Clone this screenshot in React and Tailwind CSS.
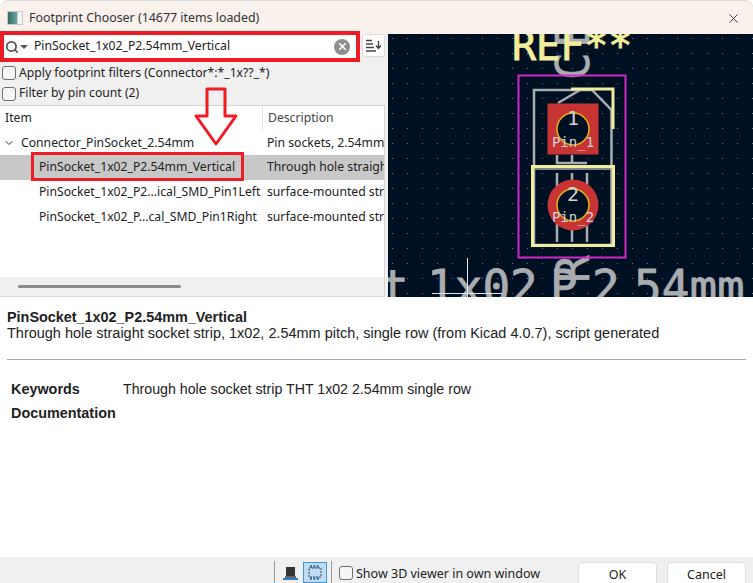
import { ChevronDown, Search, X } from 'lucide-react';

const rows = [
  { name: 'PinSocket_1x02_P2...ical_SMD_Pin1Left', desc: 'surface-mounted straight socket strip', height: 'h-[25px]' },
  { name: 'PinSocket_1x02_P...cal_SMD_Pin1Right', desc: 'surface-mounted straight socket strip', height: 'h-[24px]' },
];

function CheckBox() {
  return <span className="block w-[14px] h-[14px] shrink-0 rounded-[3px] border border-[#6e6e6e] bg-[#f6f6f6]" />;
}

function Preview() {
  const gray = '#a9adb0';
  const silk = '#f2ee9c';
  return (
    <svg className="block w-full h-full" viewBox="388 34 365 263">
      <defs>
        <pattern id="grid" x="385" y="31" width="15" height="15" patternUnits="userSpaceOnUse">
          <rect x="7" y="7" width="1" height="1" fill="#6b7683" />
        </pattern>
      </defs>
      <rect x="388" y="34" width="365" height="263" fill="#001023" />
      <rect x="388" y="34" width="365" height="263" fill="url(#grid)" />

      {/* fab layer */}
      <g fill="none" stroke={gray} strokeWidth="2.5">
        <path d="M534 245V90H592L611.5 110V245H534" />
        <path d="M558 103L580 90" />
        <path d="M557 155V163H587" />
        <path d="M572 155V163" />
        <path d="M557 173V242M572 173V242M587 173V242" />
        <path d="M534 169H611" strokeWidth="1.5" />
      </g>
      <g fontFamily="'DejaVu Sans Mono', monospace" fontSize="46" fill={gray} stroke={gray} strokeWidth="0.6">
        <text transform="rotate(-90 589 283)" x="589" y="283">R</text>
        <text transform="rotate(-90 589 80)" x="589" y="80">C</text>
        <text transform="rotate(-90 589 48)" x="589" y="48">E</text>
      </g>

      {/* courtyard */}
      <rect x="518.5" y="75.5" width="107" height="182" fill="none" stroke="#d12ac4" strokeWidth="2" />

      {/* pads */}
      <rect x="547.5" y="103.5" width="51" height="51" fill="#c83434" />
      <circle cx="573" cy="205" r="25.5" fill="#c83434" />
      <circle cx="573" cy="129" r="16" fill="#001023" stroke="#e3b51c" strokeWidth="1.5" />
      <circle cx="573" cy="205" r="16" fill="#001023" stroke="#e3b51c" strokeWidth="1.5" />

      {/* silk */}
      <rect x="532.5" y="166.5" width="81" height="79" fill="none" stroke={silk} strokeWidth="3" />
      <path d="M571 89H613V129" fill="none" stroke={silk} strokeWidth="3" />
      <text x="512" y="60" fontFamily="'DejaVu Sans Mono', monospace" fontSize="40" fill={silk} stroke={silk} strokeWidth="0.9">REF**</text>

      {/* pad labels */}
      <g fontFamily="'DejaVu Sans Mono', monospace" fill="#d0d3d6" textAnchor="middle">
        <text x="573" y="125" fontSize="20">1</text>
        <text x="573" y="201" fontSize="20">2</text>
        <text x="573" y="147" fontSize="14">Pin_1</text>
        <text x="573" y="222" fontSize="14">Pin_2</text>
      </g>

      {/* value text */}
      <g fontFamily="'DejaVu Sans Mono', monospace" fontSize="46" fill={gray} stroke={gray} strokeWidth="0.8">
        <text x="381" y="303">t</text>
        <text x="427" y="303">1x02</text>
        <text x="550" y="303">P</text>
        <text x="592" y="303">2</text>
        <text x="634" y="303">54mm</text>
      </g>

      {/* crosshair */}
      <path d="M467.5 258V297M432 293.5H502" stroke="#e8e8e8" strokeWidth="1" />
    </svg>
  );
}

export default function App() {
  return (
    <div className="relative w-[753px] h-[583px] overflow-hidden flex flex-col bg-white text-[12.2px] text-[#222] font-['Noto_Sans',sans-serif]">
      {/* title bar */}
      <div className="h-[34px] shrink-0 flex items-center pt-[1px] pl-[7px] pr-[12px] bg-[#f8f1ec] rounded-t-[8px] border-t border-[#d8d8d8]">
        <span className="w-[16px] h-[14px] border border-[#c9c9c9] bg-[linear-gradient(90deg,#2f6f6a,#6fa59d_65%,#f4f4f4_70%)] mr-[6px]" />
        <span className="text-[12.4px] text-[#333]">Footprint Chooser (14677 items loaded)</span>
        <X className="ml-auto w-[15px] h-[15px] text-[#333]" strokeWidth={1.5} />
      </div>

      {/* chooser + preview */}
      <div className="h-[263px] shrink-0 flex bg-[#f0f0f0]">
        <div className="w-[385px] shrink-0 flex flex-col">
          <div className="flex items-start -mt-[3px] h-[32px]">
            <div className="w-[360px] h-[31px] shrink-0 border-[4px] border-[#ee1c25] bg-white flex items-center pl-[1px] pr-[6px]">
              <Search className="w-[14px] h-[14px] text-[#555]" strokeWidth={3} />
              <span className="ml-[1px] w-0 h-0 border-x-[4px] border-x-transparent border-t-[4px] border-t-[#555]" />
              <span className="ml-[6px]">PinSocket_1x02_P2.54mm_Vertical</span>
              <span className="ml-auto w-[16px] h-[16px] rounded-full bg-[#8f8f8f] flex items-center justify-center">
                <X className="w-[11px] h-[11px] text-white" strokeWidth={3.5} />
              </span>
            </div>
            <div className="ml-[2px] mt-[3px] w-[23px] h-[23px] bg-white border border-[#dcdcdc] rounded-[3px] flex items-center justify-center">
              <svg width="17" height="13" viewBox="0 0 17 13" fill="none" stroke="#444" strokeWidth="1.4">
                <path d="M1 1.5H7M1 5H8M1 8.5H9M1 12H11" />
                <path d="M13.5 2V9M11 6.5L13.5 9.5L16 6.5" />
              </svg>
            </div>
          </div>
          <label className="flex items-center gap-[3px] h-[20px] pl-[2px]">
            <CheckBox />
            <span>Apply footprint filters (Connector*:*_1x??_*)</span>
          </label>
          <label className="flex items-center gap-[3px] h-[21px] pl-[2px]">
            <CheckBox />
            <span>Filter by pin count (2)</span>
          </label>

          {/* tree */}
          <div className="mt-[1px] flex-1 min-h-0 flex flex-col bg-white border border-l-0 border-[#d6d6d6] overflow-hidden">
            <div className="h-[25px] shrink-0 flex items-center">
              <span className="w-[263px] pl-[5px] pb-[1px] border-r border-[#e4e4e4] h-full flex items-center">Item</span>
              <span className="pl-[5px] pb-[1px] text-[#444]">Description</span>
            </div>
            <div className="flex-1 min-h-0">
              <div className="h-[24px] flex items-center whitespace-nowrap overflow-hidden">
                <span className="w-[263px] shrink-0 flex items-center pl-[3px]">
                  <ChevronDown className="w-[12px] h-[12px] text-[#333]" strokeWidth={2} />
                  <span className="ml-[6px]">Connector_PinSocket_2.54mm</span>
                </span>
                <span className="pl-[4px]">Pin sockets, 2.54mm</span>
              </div>
              <div className="h-[25px] flex items-center whitespace-nowrap overflow-hidden bg-[#c8c8c8]">
                <span className="w-[263px] shrink-0 pl-[39px]">PinSocket_1x02_P2.54mm_Vertical</span>
                <span className="pl-[4px]">Through hole straight socket strip</span>
              </div>
              {rows.map((row) => (
                <div key={row.name} className={`${row.height} flex items-center whitespace-nowrap overflow-hidden`}>
                  <span className="w-[263px] shrink-0 pl-[39px]">{row.name}</span>
                  <span className="pl-[4px]">{row.desc}</span>
                </div>
              ))}
            </div>
            <div className="h-[19px] shrink-0 bg-[#f0f0f0] flex items-center pl-[18px]">
              <span className="block w-[163px] h-[3px] rounded-full bg-[#8a8a8a]" />
            </div>
          </div>
        </div>
        <div className="w-[3px] shrink-0" />
        <div className="flex-1 min-w-0">
          <Preview />
        </div>
      </div>

      {/* details */}
      <div className="flex-1 min-h-0 bg-white px-[7px] pt-[12px] font-['Liberation_Sans',sans-serif] text-[14.4px] leading-[16px] text-[#222]">
        <div className="font-bold">PinSocket_1x02_P2.54mm_Vertical</div>
        <div className="text-[14.47px]">Through hole straight socket strip, 1x02, 2.54mm pitch, single row (from Kicad 4.0.7), script generated</div>
        <div className="mt-[18px] border-t border-[#a8a8a8]" />
        <div className="mt-[21px] pl-[4px] flex">
          <span className="w-[112px] font-bold">Keywords</span>
          <span className="text-[14.2px]">Through hole socket strip THT 1x02 2.54mm single row</span>
        </div>
        <div className="mt-[8px] pl-[4px] font-bold">Documentation</div>
      </div>

      {/* footer */}
      <div className="h-[26px] shrink-0 bg-[#f0f0f0] flex items-start text-[12.5px] pl-[274px]">
        <span className="w-px h-[22px] mt-[4px] bg-[#9a9a9a]" />
        <svg className="ml-[8px] mt-[9px]" width="15" height="15" viewBox="0 0 15 15">
          <rect x="3" y="1" width="9" height="9" fill="#333" />
          <rect x="2" y="10" width="11" height="2" fill="#666" />
          <rect x="0" y="12" width="15" height="2" fill="#2b7fc4" />
        </svg>
        <span className="ml-[5px] w-[24px] h-[21px] mt-[5px] bg-[#bfdcf5] border border-[#3e96dc] flex items-center justify-center">
          <svg width="16" height="15" viewBox="0 0 16 15" fill="none">
            <rect x="2" y="3" width="12" height="9" stroke="#444" strokeWidth="1" strokeDasharray="2 1" />
            <path d="M3 1.5H13M3 13.5H13" stroke="#2a6fa8" strokeWidth="2.5" strokeDasharray="2 1.4" />
          </svg>
        </span>
        <span className="ml-[4px] w-px h-[22px] mt-[4px] bg-[#9a9a9a]" />
        <span className="ml-[7px] mt-[9px]"><CheckBox /></span>
        <span className="ml-[3px] mt-[8px] whitespace-nowrap">Show 3D viewer in own window</span>
        <button className="ml-[38px] mt-[5px] w-[79px] h-[26px] pt-[1px] bg-white border border-[#dedede] rounded-[4px]">OK</button>
        <button className="ml-[10px] mt-[5px] w-[79px] h-[26px] pt-[1px] bg-white border border-[#dedede] rounded-[4px]">Cancel</button>
      </div>

      {/* red annotations drawn over the screenshot */}
      <div className="absolute left-[31px] top-[152px] w-[213px] h-[29px] border-[3px] border-[#ee1c25]" />
      <svg className="absolute left-[190px] top-[85px]" width="52" height="65" viewBox="0 0 52 65" fill="none">
        <path d="M17 4H35V31H46L26 59L6 31H17Z" stroke="#ee1c25" strokeWidth="3" strokeLinejoin="round" />
      </svg>
    </div>
  );
}
